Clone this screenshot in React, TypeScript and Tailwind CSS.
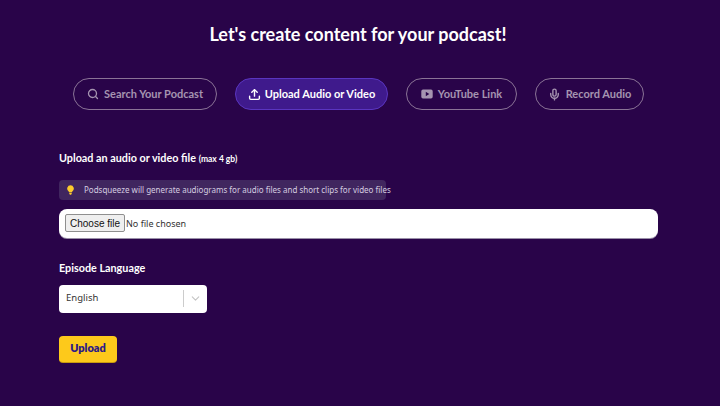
import { Search, Upload, Mic, ChevronDown } from 'lucide-react'

function YoutubeIcon() {
  return (
    <svg width="12" height="10" viewBox="0 0 12 10" className="shrink-0">
      <path fillRule="evenodd" fill="currentColor" d="M2 0.5h8a1.7 1.7 0 0 1 1.7 1.7v5.6a1.7 1.7 0 0 1-1.7 1.7H2a1.7 1.7 0 0 1-1.7-1.7V2.200a1.700 1.700 0 0 1 1.700-1.700zM4.800 2.800v4.400L8.300 5z" />
    </svg>
  )
}

function BulbIcon() {
  return (
    <svg width="7" height="10" viewBox="0 0 8 11" className="shrink-0">
      <path fill="#fbcb2c" d="M4 0a3.800 3.800 0 0 0-2.300 6.800c.4.300.6.700.7 1.200h3.200c.1-.5.300-.9.700-1.200A3.800 3.800 0 0 0 4 0z" />
      <path fill="#fbcb2c" d="M2.600 8.500h2.800v1L4.700 11H3.300l-.7-1.500z" />
    </svg>
  )
}

export default function App() {
  const pill = 'flex h-8 items-center justify-center gap-[5px] rounded-full border border-[#8a7396] text-[11px] font-bold text-[#a594b0]'

  return (
    <div className="h-[406px] w-[720px] overflow-hidden bg-[#290449] font-['Lato',sans-serif]">
      <h1 className="pt-[23px] pr-[4px] text-center text-[18px] leading-[22px] font-bold text-white">
        Let's create content for your podcast!
      </h1>

      <div className="mt-[33px] flex justify-center gap-[18px] pr-[3px]">
        <button className={`${pill} w-[144px]`}>
          <Search size={12} strokeWidth={2.6} />
          Search Your Podcast
        </button>
        <button className="flex h-8 w-[153px] items-center justify-center gap-[4px] rounded-full border border-[#5a35c0] bg-[#3f1a8c] text-[11px] font-bold text-white">
          <Upload size={13} strokeWidth={2.6} />
          Upload Audio or Video
        </button>
        <button className={`${pill} w-[111px]`}>
          <YoutubeIcon />
          YouTube Link
        </button>
        <button className={`${pill} w-[109px]`}>
          <Mic size={13} strokeWidth={2.6} />
          Record Audio
        </button>
      </div>

      <div className="mt-[40px] px-[59px]">
        <p className="text-[10.800px] leading-[16px] font-bold text-white">
          Upload an audio or video file <span className="text-[8.500px]">(max 4 gb)</span>
        </p>

        <div className="mt-[13px] flex h-5 w-[327px] items-center gap-[10px] rounded bg-[#40265f] pl-[8px] font-['Noto_Sans',sans-serif] text-[8px] whitespace-nowrap text-[#d5cde0]">
          <BulbIcon />
          Podsqueeze will generate audiograms for audio files and short clips for video files
        </div>

        <div className="mt-[9px] flex h-[28.500px] w-[599px] items-center rounded-lg bg-white pl-[6px] font-['Liberation_Sans',sans-serif] text-[10px] text-[#333333] shadow-[0_1px_0_#9a90a8]">
          <span className="flex h-[18px] items-center rounded-[2px] border border-[#8f8f8f] bg-[#efefef] px-[4px] text-[#111111]">
            Choose file
          </span>
          <span className="ml-[1px] font-['Noto_Sans',sans-serif] text-[9px]">No file chosen</span>
        </div>

        <p className="mt-[22px] text-[10.800px] leading-[16px] font-bold text-white">Episode Language</p>

        <div className="mt-[9px] flex h-[28px] w-[148px] items-center rounded bg-white pl-[7px] font-['Noto_Sans',sans-serif] text-[9.500px] text-[#333333]">
          <span className="flex-1">English</span>
          <span className="h-[17px] w-px bg-[#cccccc]" />
          <ChevronDown size={13} className="mx-[5px] text-[#c4c4c4]" />
        </div>

        <button className="mt-[23px] flex h-[26px] w-[58px] items-center justify-center rounded bg-[#fdc91b] text-[11px] font-extrabold text-[#2e1a87] shadow-[0_1px_0_#c99b10]">
          Upload
        </button>
      </div>
    </div>
  )
}
